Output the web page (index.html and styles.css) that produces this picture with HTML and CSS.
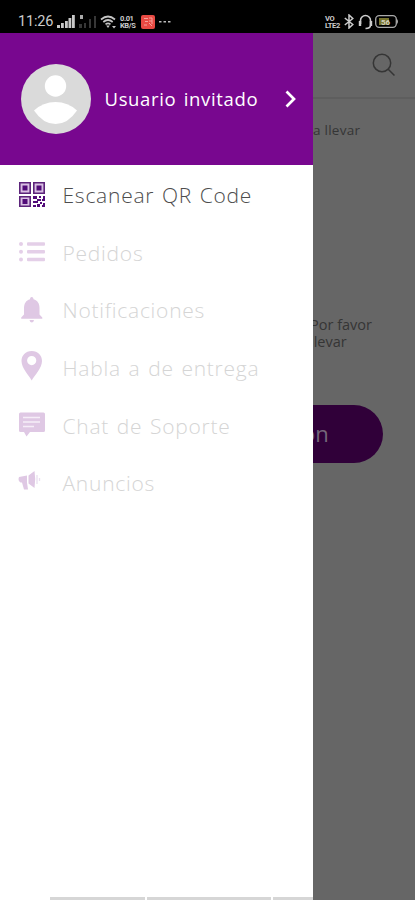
FILE: index.html
```html
<!DOCTYPE html>
<html lang="es">
<head>
<meta charset="utf-8">
<title>Menú</title>
<link rel="stylesheet" href="styles.css">
</head>
<body>
<div class="phone">
  <header class="status">
    <div class="status-left">
      <span class="clock">11:26</span>
      <svg class="signal" width="18" height="13" viewBox="0 0 18 13" fill="#c8c8c8"><path d="M0 10h3v3H0zM4 8h2.800v5H4zM8 6h2.800v7H8zM11.500 3h2.800v10h-2.800zM15 0h2.800v13H15z"/></svg>
      <svg class="signal2" width="19" height="13" viewBox="0 0 19 13"><path fill="#aaa" d="M2 0h3v4H2z"/><path fill="#373737" d="M1 9h3v4H1zM6 8h2v5H6zM11 4h2v9h-2zM16 1h2v12h-2z"/></svg>
      <svg class="wifi" width="17" height="14" viewBox="0 0 17 14" fill="none" stroke="#c4c4c4" stroke-width="1.700"><path d="M1 4.500Q8 -1.500 15 4.500M3.300 7Q8 3 12.700 7M5.500 9.300Q8 7.300 10.500 9.300"/><path fill="#c4c4c4" stroke="none" d="M6.200 10.500h3.600L8 13zM12 11h4l-2 2.500z"/></svg>
      <span class="rate"><span>0.01</span><span>KB/S</span></span>
      <svg class="alert" width="14" height="14" viewBox="0 0 14 14"><rect width="14" height="14" rx="2" fill="#e84a43"/><path d="M3 3.500h4M4 6.500h3M3 10h3M8 3h3v3H8M8 8l3 3M11 6v3" fill="none" stroke="#f5a29b"/></svg>
      <svg width="12" height="4" viewBox="0 0 12 4" fill="#bbb"><path d="M0 1h2.500v1.500H0zM4.500 1H7v1.500H4.500zM9 1h2.500v1.500H9z"/></svg>
    </div>
    <div class="status-right">
      <span class="volte"><span>VO</span><span>LTE2</span></span>
      <svg class="bt" width="10" height="15" viewBox="0 0 10 15" fill="none" stroke="#ccc" stroke-width="1.500"><path d="M.8 4l8 6.500L5 14V1l3.800 3.500L.8 11"/></svg>
      <svg class="headset" width="15" height="16" viewBox="0 0 15 16" fill="none" stroke="#ccc" stroke-width="1.600"><path d="M2.500 10V6.500a5 5 0 0 1 10 0V11q0 3.500-5 3.500"/><path d="M2 7v5M13 7v5" stroke-width="2.400"/></svg>
      <svg class="battery" width="24" height="13" viewBox="0 0 24 13"><rect x=".7" y=".7" width="20.600" height="11.600" rx="3.500" fill="none" stroke="#aaa" stroke-width="1.300"/><path d="M22 4q2 2.500 0 5z" fill="#aaa"/><path fill="#77742d" d="M4 3h10v7H4z"/><text class="battery-text" x="6" y="9.500">56</text></svg>
    </div>
  </header>

  <nav class="drawer">
    <a class="profile">
      <svg class="avatar" width="70" height="70" viewBox="0 0 70 70"><circle cx="35" cy="35" r="35" fill="#dadada"/><circle cx="34.500" cy="22" r="10.700" fill="#fff"/><path d="M13 46.500Q22 38 34.500 38T56 46.500Q47 60 34.500 60T13 46.500z" fill="#fff"/></svg>
      <span class="name">Usuario invitado</span>
      <svg class="chevron" width="12" height="18" viewBox="0 0 12 18" fill="none" stroke="#fff" stroke-width="2.700"><path d="M1.500 1.500L9 9l-7.500 7.500"/></svg>
    </a>
    <ul class="menu">
      <li class="item active">
        <svg width="28" height="30" viewBox="0 0 28 30"><path fill="#d9bfe3" d="M1 2h12v12H1zM15 2h12v12H15zM1 16h12v11H1z"/><g fill="none" stroke="#5c247b" stroke-width="1.600"><path d="M1.800 2.800h10.400v10.400H1.800zM15.800 2.800h10.400v10.400H15.800zM1.800 16.800h10.400v9.400H1.800z"/></g><g fill="#510b78"><path d="M4.500 5.500h5v5h-5zM18.500 5.500h5v5h-5zM4.500 19h5v5h-5z"/><path d="M15 16h4v3h-4zM21 16h2v2h-2zM25 16h2v5h-3v-2h1zM19 19h4v2h-3v2h-3v-2h2zM15 21h2v2h-2zM22 22h2v2h-2zM15 25h3v2h-3zM19 24h3v3h-3zM25 23h2v4h-3v-2h1z"/></g></svg>
        <span>Escanear QR Code</span>
      </li>
      <li class="item">
        <svg width="28" height="30" viewBox="0 0 28 30" fill="#e4cfe8"><circle cx="3" cy="6" r="2"/><circle cx="3" cy="13.800" r="2"/><circle cx="3" cy="21.500" r="2"/><rect x="9" y="4.200" width="18" height="3.600" rx="1"/><rect x="9" y="12" width="18" height="3.600" rx="1"/><rect x="9" y="19.700" width="18" height="3.600" rx="1"/></svg>
        <span>Pedidos</span>
      </li>
      <li class="item">
        <svg width="28" height="30" viewBox="0 0 28 30" fill="#dfc8e4"><path d="M13.700 1c1.300 0 1.800 1 1.800 2.300 4 1 6 4.500 6 8.700v6.500l2.800 3v1.300H3.200v-1.300l2.800-3V12c0-4.200 2-7.700 6-8.700C12 2 12.500 1 13.700 1zM11.500 24h4.500q-.5 2.500-2.200 2.500T11.500 24z"/></svg>
        <span>Notificaciones</span>
      </li>
      <li class="item">
        <svg class="pin" width="28" height="30" viewBox="0 0 28 30" fill="#dfc8e4"><path fill-rule="evenodd" d="M13.700 0C7.500 0 3.500 4.500 3.500 10c0 7 7 14 10.200 19.500C17 24 24 17 24 10 24 4.500 20 0 13.700 0zm0 5a4.600 4.600 0 1 1 0 9.200 4.600 4.600 0 0 1 0-9.200z"/></svg>
        <span>Habla a de entrega</span>
      </li>
      <li class="item">
        <svg width="28" height="30" viewBox="0 0 28 30"><path d="M2.500 1.500h23q1.500 0 1.500 1.500v16.500q0 1.500-1.500 1.500H12l-3.500 4.500L6 21H2.500Q1 21 1 19.500V3q0-1.500 1.500-1.500z" fill="#dfc8e4"/><path d="M5 6.500h17M5 11h17M5 15.500h11" stroke="#f6eef8" stroke-width="1.500"/></svg>
        <span>Chat de Soporte</span>
      </li>
      <li class="item">
        <svg width="28" height="30" viewBox="0 0 28 30" fill="#dfc8e4"><path d="M1 8l8-1.500v7l1 7H6l-2-7H2.500Q.5 13 .5 10zM10.500 6.500l6-4.500q1.500 8 0 17l-6-4.500z"/><path d="M19 6v9M21.500 9v3" stroke="#eadff0" stroke-width="1.300"/></svg>
        <span>Anuncios</span>
      </li>
    </ul>
    <div class="tabs-edge"><i></i><i></i><i></i></div>
  </nav>

  <main class="page">
    <div class="toolbar">
      <svg width="24" height="24" viewBox="0 0 24 24" fill="none" stroke="#353535" stroke-width="1.500"><circle cx="10" cy="10" r="8.700"/><path d="M16.200 16.200l6.300 6.300"/></svg>
    </div>
    <p class="mode">a llevar</p>
    <p class="message">Por favor<br>llevar</p>
    <div class="button"><span>ón</span></div>
  </main>
</div>
</body>
</html>
```

FILE: styles.css
```css
* { box-sizing: border-box; }

body {
  margin: 0;
  font-family: "Open Sans", "Noto Sans", sans-serif;
}

.phone {
  display: grid;
  grid-template: 33px 867px / 313px 102px;
  width: 415px;
  height: 900px;
  overflow: hidden;
  background: #666;
}

.status {
  grid-column: 1 / -1;
  display: flex;
  justify-content: space-between;
  align-items: center;
  padding: 10px 16px 0 18px;
  background: #000;
  color: #ccc;
}

.status-left, .status-right { display: flex; align-items: center; }
.clock { width: 39px; font: 14.500px/20px Roboto, sans-serif; letter-spacing: -.2px; }
.signal { margin-right: 3px; }
.signal2 { margin-right: 3px; }
.wifi { margin-right: 3px; }
.alert { margin: 0 4px 0 5px; }
.rate, .volte {
  display: flex;
  flex-direction: column;
  width: 16px;
  font: bold 7.500px/7px Roboto, sans-serif;
  letter-spacing: -.4px;
}
.volte { width: 17px; margin-right: 2px; }
.bt { margin-right: 4px; }
.headset { margin-right: 2px; }
.battery-text { font: bold 8px Roboto, sans-serif; fill: #d2d0bb; }

.drawer {
  display: flex;
  flex-direction: column;
  background: #fff;
  overflow: hidden;
}

.profile {
  display: flex;
  align-items: center;
  height: 131.500px;
  flex: none;
  padding: 1px 0 0 21px;
  background: #78078f;
  color: #fff;
}
.name {
  width: 180px;
  margin-left: 13.500px;
  font-size: 18.500px;
  line-height: 28px;
  letter-spacing: .65px;
  word-spacing: 2px;
  white-space: nowrap;
}

.menu { margin: 2px 0 0; padding: 0; list-style: none; }
.item {
  display: flex;
  align-items: center;
  height: 57.700px;
  padding-left: 18px;
  gap: 16.500px;
  color: #d5d5d5;
  font-size: 21px;
  font-weight: 300;
  line-height: 30px;
  letter-spacing: .75px;
  word-spacing: 1.500px;
  white-space: nowrap;
}
.item span { padding-bottom: 1px; }
.pin { margin-bottom: 5px; }
.active { color: #4d4d4d; }

.tabs-edge { display: flex; gap: 2px; height: 3px; margin: auto 0 0 50px; }
.tabs-edge i { background: #d6d6d6; flex: 0 0 95px; }
.tabs-edge i:nth-child(2) { flex-basis: 124px; }

.page { overflow: hidden; background: #666; color: #353535; }
.toolbar {
  display: flex;
  justify-content: flex-end;
  align-items: center;
  height: 66px;
  padding-right: 19px;
  border-bottom: 2px solid #5e5e5e;
}
.mode {
  margin: 21px 0 0;
  height: 20px;
  font-size: 13.500px;
  line-height: 20px;
  letter-spacing: .25px;
  white-space: nowrap;
}
.message {
  margin: 176px 0 0 -3px;
  font-size: 14.500px;
  line-height: 17px;
  white-space: nowrap;
}
.button {
  display: flex;
  align-items: center;
  width: 70px;
  height: 58px;
  margin-top: 55px;
  border-radius: 0 29px 29px 0;
  background: #300039;
  color: #75677a;
  font-size: 22px;
}
.button span { margin: 0 0 2px -11px; }
```
